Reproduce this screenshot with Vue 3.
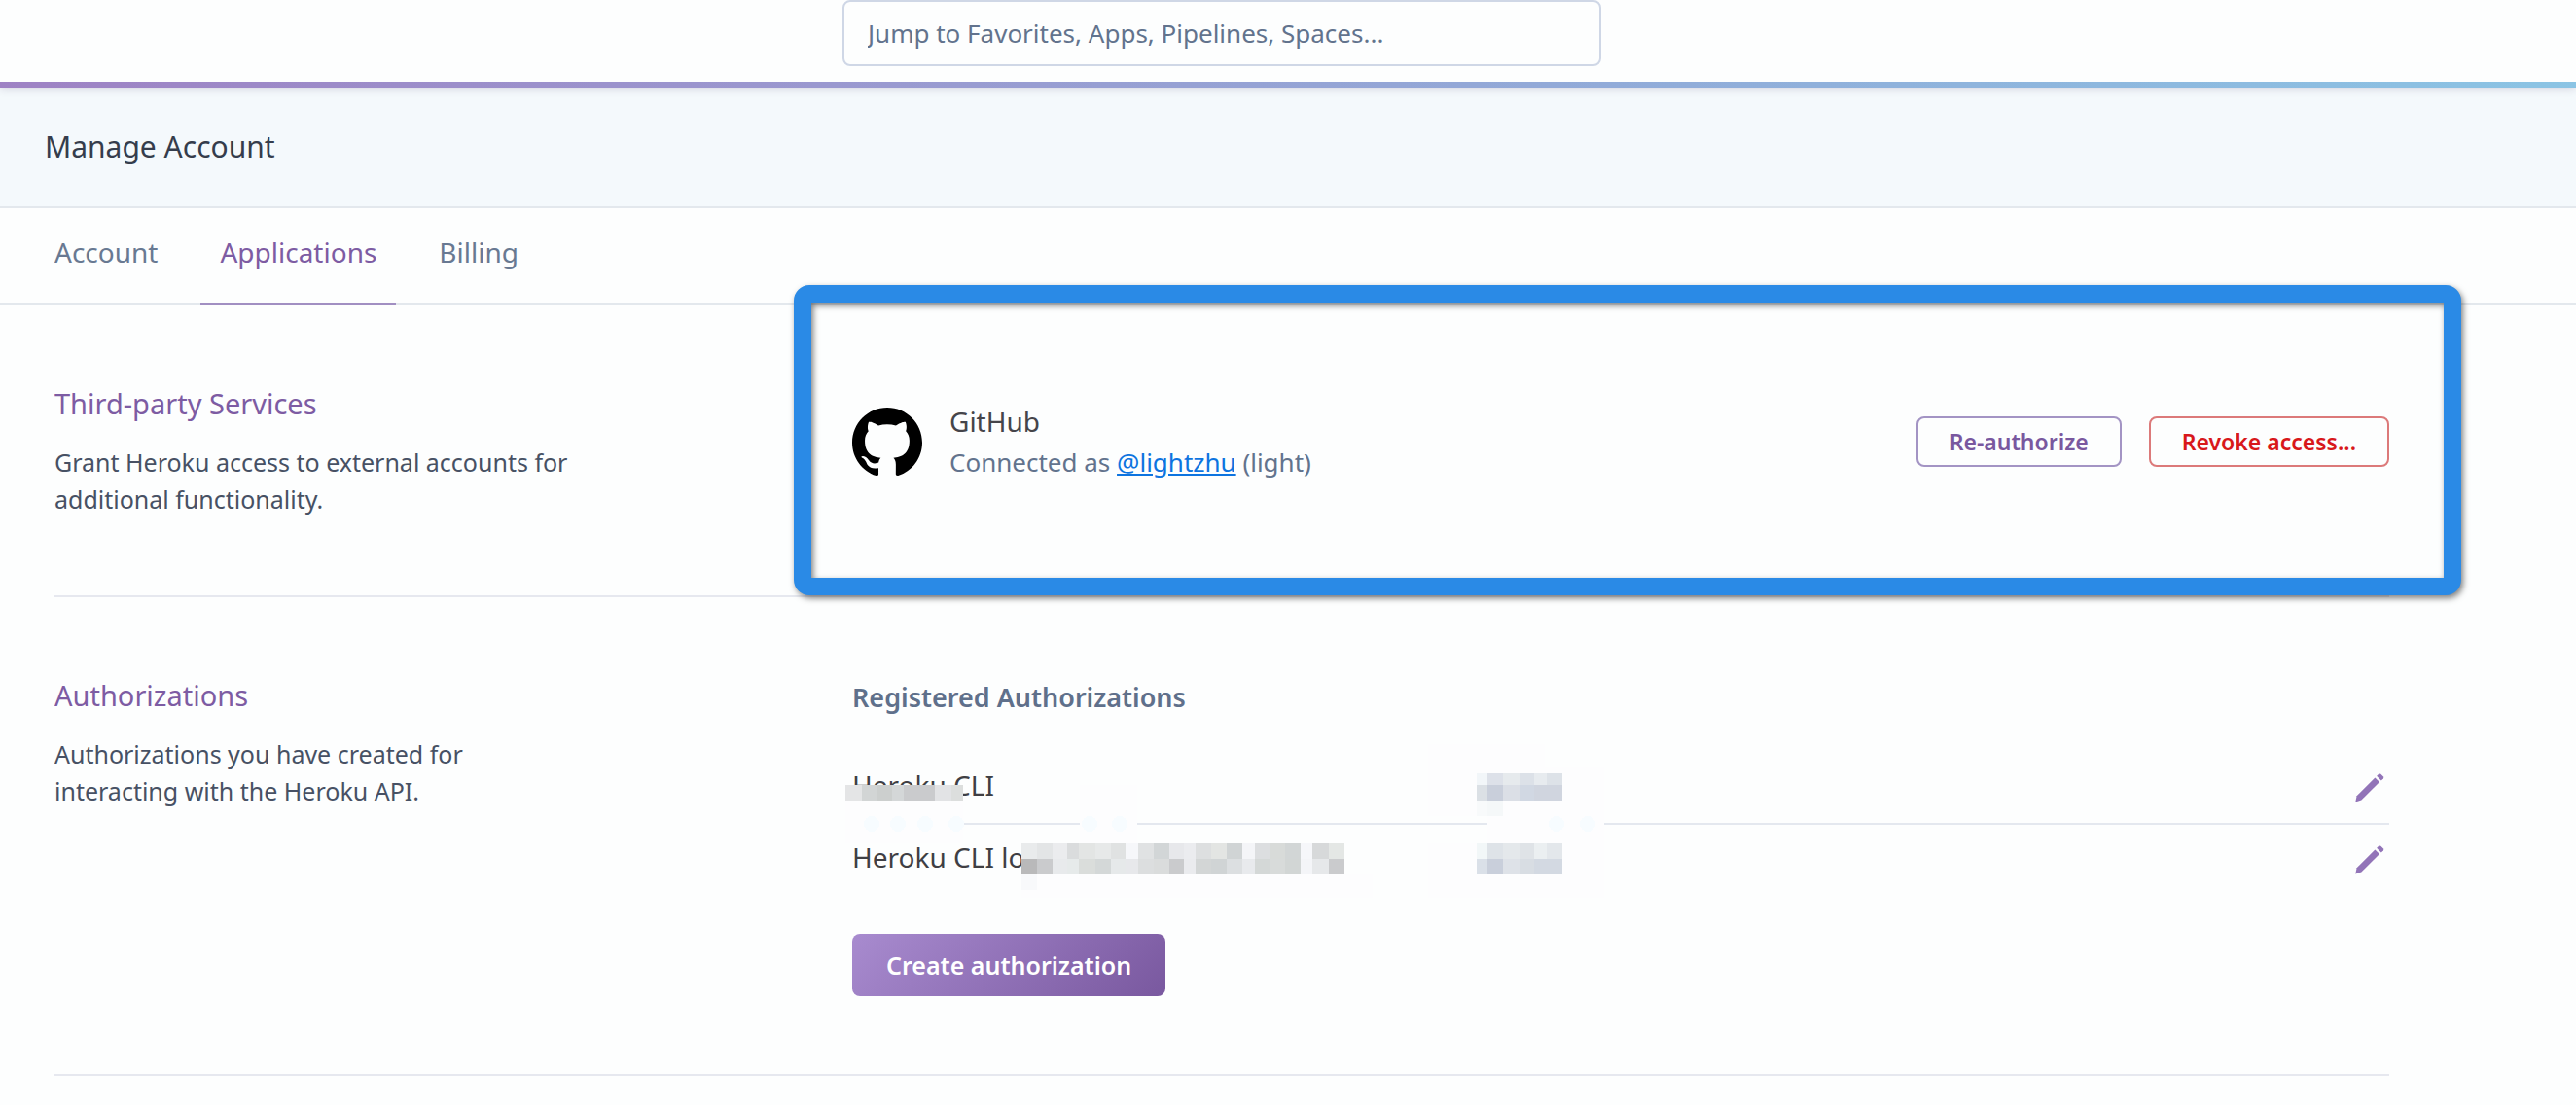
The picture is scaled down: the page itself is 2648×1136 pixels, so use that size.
<script setup>
import { ref } from 'vue'

const query = ref('')

const tabs = [
  { label: 'Account', active: false },
  { label: 'Applications', active: true },
  { label: 'Billing', active: false }
]

const authorizations = ['Heroku CLI', 'Heroku CLI lo']

// Expands column edges and one colour per cell into rectangles.
function strip(edges, y, height, colors) {
  return colors.map((fill, i) => ({
    x: edges[i], y, width: edges[i + 1] - edges[i], height, fill
  }))
}

const nameEdges = [-7, 10, 25, 41, 53, 85, 102, 114]
const detailEdges = [
  174, 190, 206, 221, 233, 250, 266, 281, 294, 310, 326, 341,
  353, 369, 385, 401, 414, 430, 445, 461, 473, 490, 506
]
const dateEdges = [642, 653, 669, 686, 701, 714, 730]

const patches = [
  { x: -7, y: 49, width: 121, height: 44, fill: '#fdfdfe' },
  { x: 234, y: 33, width: 59, height: 60, fill: '#fdfdfe' },
  { x: 592, y: -9, width: 120, height: 74, fill: '#fdfdfe' },
  { x: 653, y: 15, width: 120, height: 78, fill: '#fdfdfe' },
  { x: 592, y: 93, width: 181, height: 56, fill: '#fdfdfe' },
  { x: 174, y: 125, width: 361, height: 24, fill: '#fdfdfe' },
  { x: 174, y: 125, width: 16, height: 16, fill: '#f8f9fb' }
]

const cells = [
  ...strip(nameEdges, 33, 16, ['#e4e5e6', '#d2d5d5', '#cccfce', '#d4d7d8', '#cacbcd', '#e2e3e5', '#dcdedd']),
  ...strip(detailEdges, 93, 16, [
    '#e9ebec', '#e3e5e6', '#ebecee', '#dadcdd', '#e3e5e4', '#e7e9e9', '#e0e2e2', '#f6f7fa',
    '#e0e2e3', '#d2d6d7', '#e7e8eb', '#ebecef', '#dddfe0', '#e3e5e3', '#d0d4d5', '#f4f5f8',
    '#dcdee0', '#d8dbd9', '#d2d6d6', '#f6f7fa', '#d7d9da', '#e4e7e5'
  ]),
  ...strip(detailEdges, 109, 16, [
    '#b9b9ba', '#cacbcd', '#e8eaec', '#e6eaea', '#dadddb', '#d4d8d8', '#e6e9ea', '#e7e8eb',
    '#dcdedf', '#dadcdc', '#cacbcd', '#eaebee', '#d3d6d6', '#d0d4d5', '#dcdfe1', '#e8eaed',
    '#d4d8d7', '#d8dbda', '#d2d6d5', '#f4f5f8', '#e6e8ea', '#cacbcd'
  ]),
  ...strip(dateEdges, 21, 12, ['#f2f6f9', '#dde1e9', '#e6eaed', '#dce1e8', '#e7ebef', '#dde2e8']),
  ...strip(dateEdges, 33, 16, ['#dbe0e5', '#c9cfdb', '#dbdfe6', '#d1d8e3', '#d0d5df', '#d0d5df']),
  ...strip(dateEdges, 49, 16, ['#f8fafb', '#f5f8f9']),
  ...strip(dateEdges, 93, 16, ['#f2f7f8', '#dee3e8', '#e4e8eb', '#dfe3e7', '#ebeff1', '#e3e7eb']),
  ...strip(dateEdges, 109, 16, ['#dae0e8', '#c9cfdb', '#dee2e8', '#d8dde3', '#d3d9e2', '#d3d9e2'])
]

const dots = [20, 47, 75, 107, 244, 275, 724, 756]
</script>

<template>
  <div class="page">
    <header class="topbar">
      <input v-model="query" class="search" type="text" aria-label="Jump to"
        placeholder="Jump to Favorites, Apps, Pipelines, Spaces...">
    </header>

    <div class="titlebar">
      <h1>Manage Account</h1>
    </div>

    <nav class="tabs">
      <a v-for="tab in tabs" :key="tab.label" href="#" class="tab" :class="{ active: tab.active }">{{ tab.label }}</a>
    </nav>

    <main class="content">
      <section class="section">
        <div class="intro">
          <h2>Third-party Services</h2>
          <p>Grant Heroku access to external accounts for additional functionality.</p>
        </div>
        <div class="panel">
          <div class="service">
            <svg class="github" viewBox="0 0 24 24" aria-hidden="true">
              <path d="M12 .297c-6.63 0-12 5.373-12 12 0 5.303 3.438 9.8 8.205 11.385.6.113.82-.258.82-.577 0-.285-.01-1.04-.015-2.04-3.338.724-4.042-1.61-4.042-1.61C4.422 18.07 3.633 17.7 3.633 17.7c-1.087-.744.084-.729.084-.729 1.205.084 1.838 1.236 1.838 1.236 1.07 1.835 2.809 1.305 3.495.998.108-.776.417-1.305.76-1.605-2.665-.3-5.466-1.332-5.466-5.93 0-1.31.465-2.38 1.235-3.22-.135-.303-.54-1.523.105-3.176 0 0 1.005-.322 3.3 1.23.96-.267 1.98-.399 3-.405 1.02.006 2.04.138 3 .405 2.28-1.552 3.285-1.23 3.285-1.23.645 1.653.24 2.873.12 3.176.765.84 1.23 1.91 1.23 3.22 0 4.61-2.805 5.625-5.475 5.92.42.36.81 1.096.81 2.22 0 1.606-.015 2.896-.015 3.286 0 .315.21.69.825.57C20.565 22.092 24 17.592 24 12.297c0-6.627-5.373-12-12-12" />
            </svg>
            <div class="service-text">
              <div class="service-name">GitHub</div>
              <div class="service-status">Connected as <a href="#">@lightzhu</a> (light)</div>
            </div>
            <div class="actions">
              <button type="button" class="btn">Re-authorize</button>
              <button type="button" class="btn danger">Revoke access...</button>
            </div>
          </div>
          <div class="highlight" aria-hidden="true"></div>
        </div>
      </section>

      <section class="section">
        <div class="intro">
          <h2>Authorizations</h2>
          <p>Authorizations you have created for interacting with the Heroku API.</p>
        </div>
        <div class="panel">
          <h3>Registered Authorizations</h3>
          <div class="list">
            <table>
              <tbody>
                <tr v-for="name in authorizations" :key="name">
                  <td class="name">{{ name }}</td>
                  <td class="edit">
                    <button type="button" class="icon-btn" :aria-label="'Edit ' + name">
                      <svg viewBox="0 0 30 30" aria-hidden="true">
                        <path d="M0.3 29.6 1.6 23.2 20.4 4.4 25 9 6.4 27.6Z" />
                        <path d="M22.1 2.7 24.1.8Q25.2 0 26.3.8L28.8 3.3Q29.8 4.6 28.9 5.6L26.8 7.4Z" />
                      </svg>
                    </button>
                  </td>
                </tr>
              </tbody>
            </table>
            <svg class="redaction" viewBox="-8 -34 790 200" shape-rendering="crispEdges" aria-hidden="true">
              <rect v-for="(r, i) in patches" :key="'p' + i" v-bind="r" />
              <circle v-for="x in dots" :key="x" :cx="x" cy="73" r="8" fill="#f7fcff" />
              <rect v-for="(r, i) in cells" :key="'c' + i" v-bind="r" />
            </svg>
          </div>
          <button type="button" class="primary">Create authorization</button>
        </div>
      </section>
    </main>
  </div>
</template>

<style>
body {
  margin: 0;
  background: #fdfefe;
}
</style>

<style scoped>
.page {
  font-family: "Noto Sans", "Open Sans", sans-serif;
  font-size: 26px;
  font-weight: 400;
  color: #475164;
}

h1, h2, h3, p {
  margin: 0;
  font-weight: inherit;
}

button, input {
  font-family: inherit;
  box-sizing: border-box;
}

button {
  cursor: pointer;
}

.topbar {
  position: relative;
  display: flex;
  justify-content: center;
  padding: 0 136px 16px 0;
  border-bottom: 6px solid;
  border-image: linear-gradient(90deg, #9e82c4, #9a99d0 33%, #91acd9 64%, #8bc4e4) 1;
  box-shadow: 0 2px 8px rgba(60, 40, 90, 0.16);
}

.search {
  width: 780px;
  height: 68px;
  padding: 0 24px;
  border: 2px solid #cfd7e6;
  border-radius: 8px;
  background: #fdfefe;
  color: #62738d;
  font-size: 26px;
}

.search::placeholder {
  color: #62738d;
  opacity: 1;
}

.titlebar {
  display: flex;
  align-items: center;
  min-height: 122px;
  padding: 0 46px;
  background: #f4f9fc;
  border-bottom: 2px solid #e3e8ed;
}

h1 {
  font-size: 30px;
  line-height: 42px;
  color: #353d4c;
}

.tabs {
  display: flex;
  gap: 24px;
  padding: 0 36px;
  border-bottom: 2px solid #e3e8ed;
}

.tab {
  margin-bottom: -2px;
  padding: 24px 20px 32px;
  border-bottom: 2px solid transparent;
  font-size: 28px;
  line-height: 42px;
  color: #687992;
  text-decoration: none;
}

.tab.active {
  color: #7d5ca3;
  border-bottom-color: #a18fc2;
}

.content {
  padding: 0 192px 0 56px;
}

.section {
  display: grid;
  grid-template-columns: 41fr 79fr;
  padding: 80px 0;
  border-bottom: 2px solid #e6e8ef;
}

h2 {
  margin-bottom: 20px;
  font-size: 29px;
  line-height: 42px;
  color: #7d5ca3;
}

.intro p {
  max-width: 540px;
  font-size: 25px;
  line-height: 38px;
}

.panel {
  position: relative;
}

.service {
  display: flex;
  align-items: center;
  padding-top: 18px;
}

.github {
  width: 72px;
  height: 72px;
  margin-right: 28px;
}

.service-name {
  font-size: 28px;
  line-height: 42px;
  color: #45454a;
}

.service-status {
  line-height: 42px;
  color: #62738d;
}

.service-status a {
  color: #0d74e0;
}

.actions {
  display: flex;
  gap: 28px;
  margin-left: auto;
}

.btn {
  height: 52px;
  padding: 0 32px;
  border: 2px solid #a394c4;
  border-radius: 8px;
  background: transparent;
  color: #79589f;
  font-size: 23px;
  font-weight: 600;
}

.btn.danger {
  border-color: #dc7a7a;
  color: #d8181b;
}

.highlight {
  position: absolute;
  top: -101px;
  right: -74px;
  bottom: -80px;
  left: -60px;
  border: 18px solid #2a8ae6;
  border-radius: 16px;
  filter: drop-shadow(2px 3px 3px rgba(0, 0, 0, 0.5));
  pointer-events: none;
}

h3 {
  margin-bottom: 34px;
  font-size: 27px;
  font-weight: 600;
  line-height: 46px;
  color: #5f708b;
}

.list {
  position: relative;
}

table {
  width: 100%;
  border-collapse: separate;
  border-spacing: 0;
}

td {
  padding: 0;
}

tr:first-child td {
  border-bottom: 2px solid #e4e8ef;
}

.name {
  padding: 12px 0 18px;
  font-size: 28px;
  line-height: 42px;
  color: #3f3f44;
}

.edit {
  width: 36px;
  padding-right: 5px;
  text-align: right;
}

.icon-btn {
  display: block;
  margin-left: auto;
  padding: 0;
  border: 0;
  background: none;
}

.icon-btn svg {
  display: block;
  width: 30px;
  height: 30px;
  fill: #9274b8;
}

.redaction {
  position: absolute;
  top: -34px;
  left: -8px;
  width: 790px;
  height: 200px;
  pointer-events: none;
}

.primary {
  display: block;
  height: 64px;
  margin-top: 40px;
  padding: 0 35px;
  border: 0;
  border-radius: 8px;
  background: linear-gradient(135deg, #a88bcf, #79589f);
  color: #fff;
  font-size: 25px;
  font-weight: 600;
}
</style>
